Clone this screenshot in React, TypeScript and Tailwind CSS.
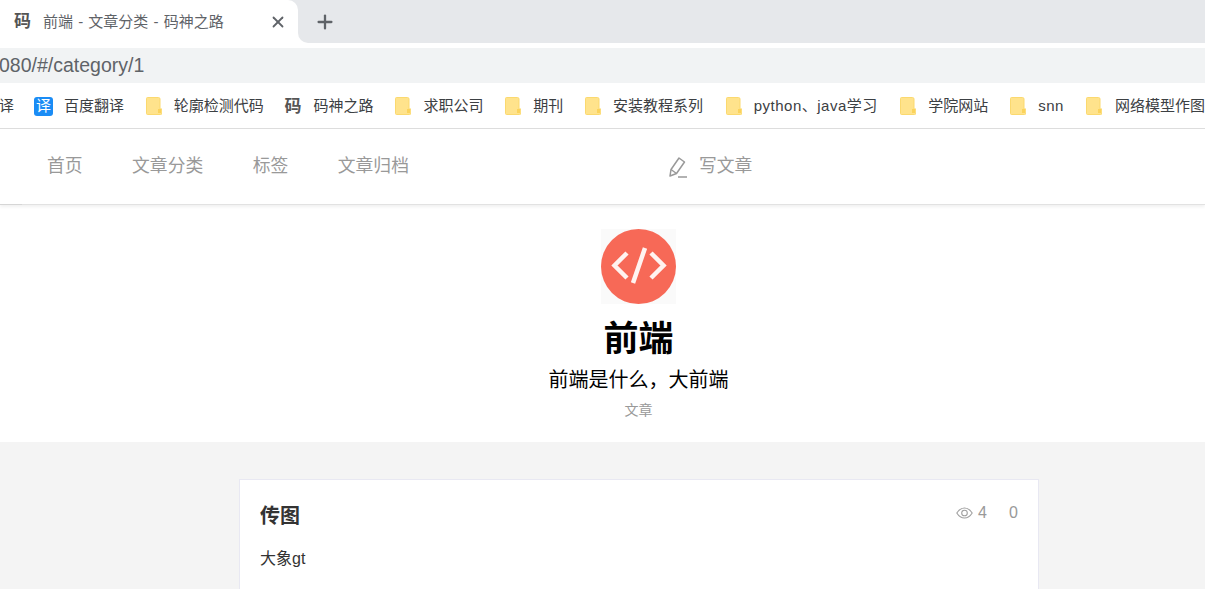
import { Plus, X } from "lucide-react";

const cjk = "font-['Liberation_Sans','Noto_Sans_CJK_SC',sans-serif]";

const Folder = () => (
  <svg width="16" height="18" viewBox="0 0 16 18" className="shrink-0">
    <path d="M1.5 0.5h11a1.5 1.5 0 0 1 1.5 1.5v10h2v4a1.5 1.5 0 0 1-1.5 1.5h-13a1 1 0 0 1-1-1v-15a1 1 0 0 1 1-1z" fill="#ffe38c" stroke="#fbd96f" strokeWidth="1" />
    <rect x="12" y="12" width="3" height="4" fill="#fbd35c" />
  </svg>
);

const MaLogo = () => (
  <span className="block w-[17px] shrink-0 text-center text-[17px] leading-none font-bold text-[#555555]">码</span>
);

const navItems = ["首页", "文章分类", "标签", "文章归档"];

export default function App() {
  return (
    <div className={`h-[589px] w-[1205px] overflow-hidden bg-[#f4f4f4] ${cjk}`}>
      {/* Tab strip */}
      <div className="relative flex h-[48px] bg-white">
        <div className="flex h-[43px] w-full items-start bg-[#e6e8eb]">
          <div className="flex h-[43px] w-[298px] items-center rounded-tr-[10px] bg-white pr-[11px] pl-[14px]">
            <MaLogo />
            <span className="ml-[12px] flex-1 pt-px text-[15px] [word-spacing:1px] whitespace-nowrap text-[#5f6368]">前端 - 文章分类 - 码神之路</span>
            <X size={18} strokeWidth={2.4} className="text-[#5f6368]" />
          </div>
          <div className="ml-[16px] flex h-[43px] items-center">
            <Plus size={22} strokeWidth={2.5} className="text-[#5f6368]" />
          </div>
        </div>
        <div className="absolute top-[33px] left-[298px] size-[10px] bg-white">
          <div className="size-[10px] rounded-bl-[10px] bg-[#e6e8eb]" />
        </div>
      </div>

      {/* Address bar */}
      <div className="flex h-[35px] items-center overflow-hidden bg-[#f1f3f4] text-[19.5px] whitespace-nowrap text-[#5f6368]">
        <span className="-ml-[1px]">080/#/category/1</span>
      </div>

      {/* Bookmarks */}
      <div className="flex h-[46px] items-center overflow-hidden border-b border-[#dddddd] bg-white pt-[1px] text-[15px] whitespace-nowrap text-[#3c4043]">
        <span className="-ml-[1px] w-[35px]">译</span>
        <span className="flex size-[19px] shrink-0 items-center justify-center rounded-[3px] bg-[#1a8cf5] text-[15px] text-white">译</span>
        <span className="ml-[11px] w-[82px]">百度翻译</span>
        <Folder />
        <span className="ml-[12px] w-[99px]">轮廓检测代码</span>
        <span className="ml-[12px]"><MaLogo /></span>
        <span className="ml-[12px] w-[60px]">码神之路</span>
        <span className="ml-[22px]"><Folder /></span>
        <span className="ml-[12px] w-[82px]">求职公司</span>
        <Folder />
        <span className="ml-[12px] w-[52px]">期刊</span>
        <Folder />
        <span className="ml-[12px] w-[113px]">安装教程系列</span>
        <Folder />
        <span className="ml-[12px] w-[147px] tracking-[0.5px]">python、java学习</span>
        <Folder />
        <span className="ml-[12px] w-[82px]">学院网站</span>
        <Folder />
        <span className="ml-[12px] w-[48px] tracking-[0.5px]">snn</span>
        <Folder />
        <span className="ml-[13px]">网络模型作图</span>
      </div>

      {/* Site nav */}
      <div className="relative flex h-[76px] items-center border-b border-[#e2e2e2] bg-white pl-[47px] text-[17.8px] whitespace-nowrap text-[#999999] shadow-[0_2px_3px_rgba(0,0,0,0.06)]">
        <div className="flex w-[621px] gap-[49.5px]">
          {navItems.map((item) => (
            <span key={item}>{item}</span>
          ))}
        </div>
        <svg width="20" height="22" viewBox="0 0 20 22" fill="none" stroke="#999999" strokeWidth="1.5" className="shrink-0">
          <path d="M2 20 3 13.500 11 2l5.500 4-8 11.500z" strokeLinejoin="round" />
          <path d="M3 13.500l5.500 4" />
          <path d="M10 21h9" />
        </svg>
        <span className="ml-[11px]">写文章</span>
        <div className="absolute -bottom-px left-0 h-px w-[22px] bg-[#d6d6d6]" />
      </div>

      {/* Category header */}
      <div className="flex h-[237px] flex-col items-center bg-white pt-[24px] pl-[72px]">
        <svg width="75" height="75" viewBox="0 0 75 75" className="shrink-0 bg-[#fafafa]">
          <circle cx="37.500" cy="37.500" r="37.500" fill="#f76957" />
          <path d="M26 24 13.500 36.500 26 49M50 24l12.500 12.500L50 49M44 19l-12 35" fill="none" stroke="#fff3f0" strokeWidth="4.500" />
        </svg>
        <h1 className="mt-[13px] text-[35px] leading-[43px] font-bold text-black">前端</h1>
        <p className="mt-[6px] text-[20px] leading-[28px] text-black">前端是什么，大前端</p>
        <span className="mt-[6px] text-[14px] leading-[20px] text-[#999999]">文章</span>
      </div>

      {/* Article list */}
      <div className="mt-[37px] ml-[239px] h-[200px] w-[800px] border border-[#e8e8f2] bg-white px-[20px] pt-[21px]">
        <div className="flex items-start justify-between">
          <h3 className="text-[20px] leading-[30px] font-bold text-[#333333]">传图</h3>
          <div className="flex items-center text-[16px] leading-[24px] text-[#999999]">
            <svg width="17" height="12" viewBox="0 0 17 12" fill="none" stroke="#a0a0a0" strokeWidth="1.1">
              <path d="M0.800 6C3 2.500 5.500 1 8.500 1s5.500 1.500 7.700 5c-2.200 3.500-4.700 5-7.700 5S3 9.500 0.800 6z" />
              <circle cx="8.500" cy="6" r="2.800" />
            </svg>
            <span className="ml-[5px] w-[31px]">4</span>
            <span>0</span>
          </div>
        </div>
        <p className="mt-[16px] text-[16px] leading-[24px] text-[#333333]">大象gt</p>
      </div>
    </div>
  );
}
